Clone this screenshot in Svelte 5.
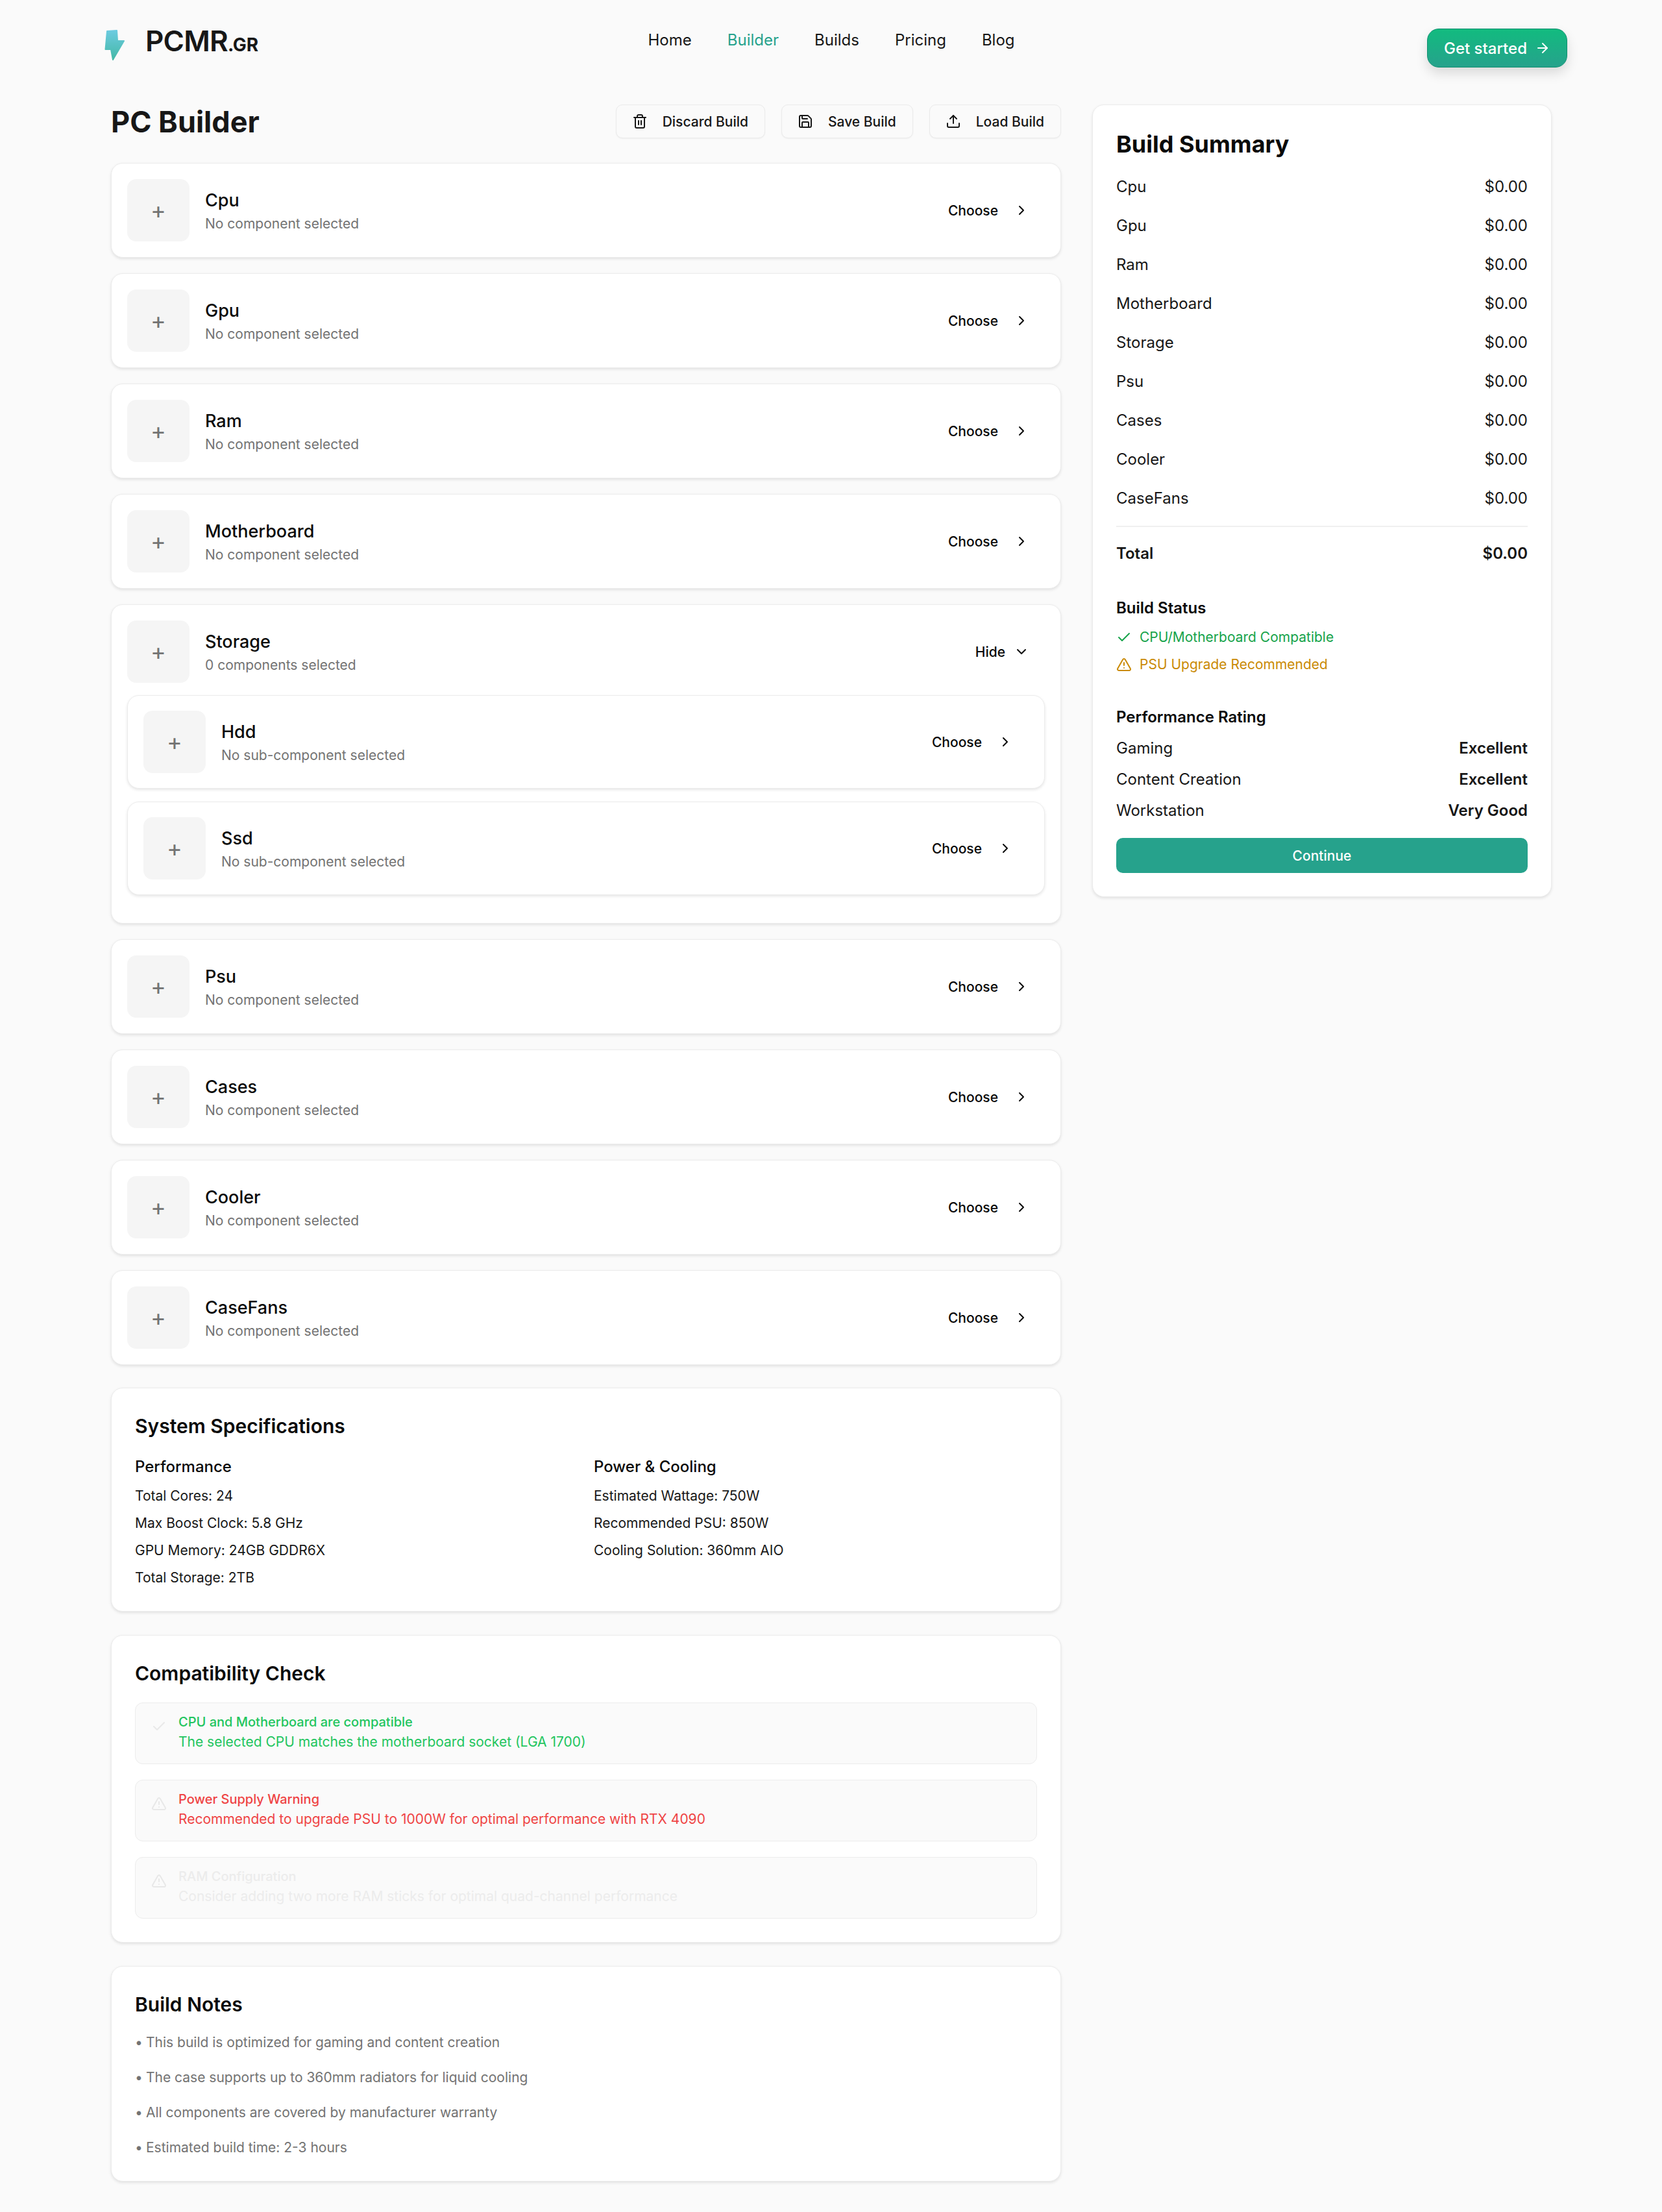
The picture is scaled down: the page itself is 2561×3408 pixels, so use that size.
<script>
  const before = ['Cpu', 'Gpu', 'Ram', 'Motherboard'];
  const after = ['Psu', 'Cases', 'Cooler', 'CaseFans'];
  const subs = ['Hdd', 'Ssd'];
  const summary = ['Cpu', 'Gpu', 'Ram', 'Motherboard', 'Storage', 'Psu', 'Cases', 'Cooler', 'CaseFans'];
  const ratings = [['Gaming', 'Excellent'], ['Content Creation', 'Excellent'], ['Workstation', 'Very Good']];
  const perf = ['Total Cores: 24', 'Max Boost Clock: 5.8 GHz', 'GPU Memory: 24GB GDDR6X', 'Total Storage: 2TB'];
  const power = ['Estimated Wattage: 750W', 'Recommended PSU: 850W', 'Cooling Solution: 360mm AIO'];
  const checks = [
    { tone: 'ok', icon: 'check', title: 'CPU and Motherboard are compatible', text: 'The selected CPU matches the motherboard socket (LGA 1700)' },
    { tone: 'bad', icon: 'warn', title: 'Power Supply Warning', text: 'Recommended to upgrade PSU to 1000W for optimal performance with RTX 4090' },
    { tone: 'faint', icon: 'warn', title: 'RAM Configuration', text: 'Consider adding two more RAM sticks for optimal quad-channel performance' }
  ];
  const notes = [
    'This build is optimized for gaming and content creation',
    'The case supports up to 360mm radiators for liquid cooling',
    'All components are covered by manufacturer warranty',
    'Estimated build time: 2-3 hours'
  ];
</script>

{#snippet chevron()}
  <svg class="icon" viewBox="0 0 24 24"><path d="m9 18 6-6-6-6" /></svg>
{/snippet}

{#snippet check()}
  <svg class="icon" viewBox="0 0 24 24"><path d="M20 6 9 17l-5-5" /></svg>
{/snippet}

{#snippet warn()}
  <svg class="icon" viewBox="0 0 24 24">
    <path d="m21.73 18-8-14a2 2 0 0 0-3.48 0l-8 14A2 2 0 0 0 4 21h16a2 2 0 0 0 1.73-3" />
    <path d="M12 9v4" />
    <path d="M12 17h.01" />
  </svg>
{/snippet}

{#snippet slot(name, sub, nested)}
  <div class="slot" class:nested>
    <div class="thumb">+</div>
    <div class="info">
      <div class="name">{name}</div>
      <div class="sub">{sub}</div>
    </div>
    <button class="choose">Choose {@render chevron()}</button>
  </div>
{/snippet}

<header>
  <div class="brand">
    <svg class="bolt" viewBox="0 0 32 50">
      <defs>
        <linearGradient id="boltFill" x1="0" y1="0" x2="0" y2="1">
          <stop offset="0" stop-color="#6ccbe0" />
          <stop offset="1" stop-color="#44b8a6" />
        </linearGradient>
      </defs>
      <polygon points="4,3 19,2 20,18 30,18 13,47 10,31 1.5,31" fill="url(#boltFill)" stroke="url(#boltFill)" stroke-width="2" stroke-linejoin="round" />
    </svg>
    <span class="logo">PCMR<small>.GR</small></span>
  </div>
  <nav>
    <span>Home</span>
    <span class="active">Builder</span>
    <span>Builds</span>
    <span>Pricing</span>
    <span>Blog</span>
  </nav>
  <div class="cta-wrap">
    <button class="cta">
      Get started
      <svg class="icon" viewBox="0 0 24 24"><path d="M5 12h14" /><path d="m12 5 7 7-7 7" /></svg>
    </button>
  </div>
</header>

<main>
  <div class="left">
    <div class="title-row">
      <h1>PC Builder</h1>
      <div class="actions">
        <button class="ghost">
          <svg class="icon" viewBox="0 0 24 24">
            <path d="M3 6h18" /><path d="M19 6v14c0 1-1 2-2 2H7c-1 0-2-1-2-2V6" /><path d="M8 6V4c0-1 1-2 2-2h4c1 0 2 1 2 2v2" /><path d="M10 11v6" /><path d="M14 11v6" />
          </svg>
          Discard Build
        </button>
        <button class="ghost">
          <svg class="icon" viewBox="0 0 24 24">
            <path d="M15.2 3a2 2 0 0 1 1.4.6l3.8 3.8a2 2 0 0 1 .6 1.4V19a2 2 0 0 1-2 2H5a2 2 0 0 1-2-2V5a2 2 0 0 1 2-2z" /><path d="M17 21v-7a1 1 0 0 0-1-1H8a1 1 0 0 0-1 1v7" /><path d="M7 3v4a1 1 0 0 0 1 1h7" />
          </svg>
          Save Build
        </button>
        <button class="ghost">
          <svg class="icon" viewBox="0 0 24 24">
            <path d="M21 15v4a2 2 0 0 1-2 2H5a2 2 0 0 1-2-2v-4" /><path d="M17 8l-5-5-5 5" /><path d="M12 3v12" />
          </svg>
          Load Build
        </button>
      </div>
    </div>

    <div class="slots">
      {#each before as name}
        {@render slot(name, 'No component selected', false)}
      {/each}

      <div class="group">
        <div class="group-head">
          <div class="thumb">+</div>
          <div class="info">
            <div class="name">Storage</div>
            <div class="sub">0 components selected</div>
          </div>
          <button class="choose hide">
            Hide
            <svg class="icon" viewBox="0 0 24 24"><path d="m6 9 6 6 6-6" /></svg>
          </button>
        </div>
        {#each subs as name}
          {@render slot(name, 'No sub-component selected', true)}
        {/each}
      </div>

      {#each after as name}
        {@render slot(name, 'No component selected', false)}
      {/each}
    </div>

    <section class="card">
      <h2>System Specifications</h2>
      <div class="spec-grid">
        <div>
          <h3>Performance</h3>
          <ul class="specs">
            {#each perf as row}<li>{row}</li>{/each}
          </ul>
        </div>
        <div>
          <h3>Power &amp; Cooling</h3>
          <ul class="specs">
            {#each power as row}<li>{row}</li>{/each}
          </ul>
        </div>
      </div>
    </section>

    <section class="card">
      <h2>Compatibility Check</h2>
      <div class="checks">
        {#each checks as item}
          <div class="check {item.tone}">
            <div class="check-icon">
              {#if item.icon === 'check'}{@render check()}{:else}{@render warn()}{/if}
            </div>
            <div>
              <div class="check-title">{item.title}</div>
              <div class="check-text">{item.text}</div>
            </div>
          </div>
        {/each}
      </div>
    </section>

    <section class="card">
      <h2>Build Notes</h2>
      <ul class="notes">
        {#each notes as note}
          <li><span class="dot">•</span>{note}</li>
        {/each}
      </ul>
    </section>
  </div>

  <aside class="summary">
    <h2 class="summary-title">Build Summary</h2>
    <div class="rows">
      {#each summary as name}
        <div class="row"><span>{name}</span><span>$0.00</span></div>
      {/each}
    </div>
    <div class="row total"><span>Total</span><span>$0.00</span></div>

    <h3 class="block-title">Build Status</h3>
    <div class="status ok">{@render check()}CPU/Motherboard Compatible</div>
    <div class="status warning">{@render warn()}PSU Upgrade Recommended</div>

    <h3 class="block-title">Performance Rating</h3>
    <div class="ratings">
      {#each ratings as [label, value]}
        <div class="row"><span>{label}</span><strong>{value}</strong></div>
      {/each}
    </div>
    <button class="continue">Continue</button>
  </aside>
</main>

<style>
  :global(body) {
    background: #fafafa;
    color: #171717;
    font-family: Inter, "Liberation Sans", sans-serif;
  }

  button {
    font-family: inherit;
    cursor: pointer;
  }

  .icon {
    width: 24px;
    height: 24px;
    flex: none;
    fill: none;
    stroke: currentColor;
    stroke-width: 2;
    stroke-linecap: round;
    stroke-linejoin: round;
  }

  header {
    display: grid;
    grid-template-columns: 1fr auto 1fr;
    height: 161px;
    padding: 0 146px 0 147px;
    box-sizing: border-box;
  }

  .brand {
    display: flex;
    align-items: flex-start;
    gap: 31px;
    padding: 45px 0 0 14px;
  }

  .bolt {
    width: 32px;
    height: 50px;
  }

  .logo {
    margin-top: -7px;
    font-size: 44px;
    font-weight: 600;
    letter-spacing: -0.8px;
    line-height: 50px;
    color: #171717;
  }

  .logo small {
    font-size: 28px;
    font-weight: 700;
    letter-spacing: -0.2px;
  }

  nav {
    display: flex;
    gap: 55px;
    padding-top: 44px;
    font-size: 24px;
    line-height: 36px;
  }

  nav span {
    font-weight: 400;
  }

  .active {
    color: #26a28c;
  }

  .cta-wrap {
    display: flex;
    justify-content: flex-end;
    align-items: flex-start;
    padding-top: 44px;
  }

  .cta {
    display: flex;
    align-items: center;
    gap: 12px;
    height: 60px;
    width: 216px;
    justify-content: center;
    border: 1px solid #0f8f70;
    border-radius: 18px;
    background: linear-gradient(180deg, #12bb7f, #26a28c);
    color: #fff;
    font-size: 24px;
    font-weight: 500;
    box-shadow: 0 9px 18px rgba(0, 0, 0, 0.13);
  }

  main {
    display: grid;
    grid-template-columns: 1464px 708px;
    gap: 48px;
    align-items: start;
    padding: 0 170px 49px 171px;
  }

  .title-row {
    display: flex;
    justify-content: space-between;
    align-items: center;
    height: 52px;
    margin-bottom: 38px;
  }

  h1 {
    margin: 0;
    font-size: 45px;
    font-weight: 700;
    color: #171717;
  }

  .actions {
    display: flex;
    gap: 25px;
  }

  .ghost {
    display: flex;
    align-items: center;
    gap: 23px;
    height: 52px;
    padding: 0 25px 0 24px;
    border: 1px solid #ebebeb;
    border-radius: 10px;
    background: #fafafa;
    color: #171717;
    font-size: 21px;
    font-weight: 500;
    box-shadow: 0 1px 2px rgba(0, 0, 0, 0.05);
  }

  .slots {
    display: flex;
    flex-direction: column;
    gap: 24px;
  }

  .slot,
  .group,
  .card,
  .summary {
    border: 1px solid #ececec;
    border-radius: 18px;
    background: #fff;
    box-shadow: 0 2px 4px rgba(0, 0, 0, 0.1);
  }

  .slot {
    display: flex;
    align-items: center;
    gap: 24px;
    padding: 24px;
  }

  .slot.nested {
    margin-bottom: 20px;
    height: 144px;
    box-sizing: border-box;
  }

  .group {
    padding: 24px 24px 23px;
  }

  .group-head {
    display: flex;
    align-items: center;
    gap: 24px;
    margin-bottom: 19px;
  }

  .thumb {
    display: flex;
    align-items: center;
    justify-content: center;
    flex: none;
    width: 96px;
    height: 96px;
    border-radius: 14px;
    background: #f5f5f5;
    color: #737373;
    font-size: 36px;
    line-height: 1;
  }

  .info {
    flex: 1;
  }

  .name {
    font-size: 27px;
    font-weight: 500;
    line-height: 40px;
    color: #0a0a0a;
  }

  .sub {
    margin-top: 1px;
    font-size: 21px;
    line-height: 30px;
    color: #737373;
  }

  .choose {
    display: flex;
    align-items: center;
    gap: 24px;
    padding: 0 24px;
    border: 0;
    background: none;
    color: #0a0a0a;
    font-size: 21px;
    font-weight: 500;
  }

  .choose.hide {
    gap: 13px;
  }

  .card {
    margin-top: 36px;
    padding: 36px;
  }

  .slots + .card {
    margin-top: 35px;
  }

  h2 {
    margin: 0 0 22px;
    font-size: 30px;
    font-weight: 600;
    line-height: 45px;
    color: #0a0a0a;
  }

  h3 {
    margin: 0 0 12px;
    font-size: 24px;
    font-weight: 500;
    line-height: 36px;
    color: #0a0a0a;
  }

  .spec-grid {
    display: grid;
    grid-template-columns: 1fr 1fr;
    gap: 24px;
  }

  ul {
    margin: 0;
    padding: 0;
    list-style: none;
  }

  .specs {
    display: flex;
    flex-direction: column;
    gap: 12px;
    font-size: 21px;
    line-height: 30px;
    color: #171717;
  }

  .checks {
    display: flex;
    flex-direction: column;
    gap: 24px;
  }

  .check {
    display: flex;
    gap: 18px;
    padding: 14px 24px 18px;
    border: 1px solid #ececec;
    border-radius: 12px;
    background: #fafafa;
    font-size: 21px;
    line-height: 30px;
  }

  .check-icon {
    padding-top: 10px;
    height: 24px;
    color: #e8e8e8;
  }

  .check-title {
    font-size: 20px;
    font-weight: 500;
  }

  .check-text {
    margin-top: 1px;
  }

  .check.ok {
    color: #22c55e;
  }

  .check.bad {
    color: #ef4444;
  }

  .check.faint {
    color: #ececec;
  }

  .notes {
    display: flex;
    flex-direction: column;
    gap: 24px;
    margin-top: -1px;
    font-size: 21px;
    line-height: 30px;
    color: #737373;
  }

  .dot {
    display: inline-block;
    width: 17px;
  }

  .summary {
    padding: 36px;
  }

  .summary-title {
    margin: 0 0 24px;
    font-size: 36px;
    font-weight: 700;
    line-height: 48px;
  }

  .rows,
  .ratings {
    display: flex;
    flex-direction: column;
    gap: 24px;
    padding-bottom: 24px;
    border-bottom: 2px solid #f0f0f0;
  }

  .ratings {
    gap: 12px;
    padding-bottom: 0;
    border: 0;
  }

  .row {
    display: flex;
    justify-content: space-between;
    font-size: 24px;
    line-height: 36px;
  }

  .row strong {
    font-weight: 600;
  }

  .total {
    margin-top: 23px;
    font-weight: 600;
  }

  .block-title {
    margin: 48px 0 12px;
    font-weight: 600;
  }

  .status {
    display: flex;
    align-items: center;
    gap: 12px;
    margin-bottom: 12px;
    font-size: 21px;
    line-height: 30px;
  }

  .status.ok {
    color: #16a34a;
  }

  .status.warning {
    color: #ca8a04;
    margin-bottom: 0;
  }

  .continue {
    display: block;
    width: 100%;
    height: 54px;
    margin-top: 24px;
    border: 0;
    border-radius: 10px;
    background: #26a28c;
    color: #fff;
    font-size: 21px;
    font-weight: 500;
  }
</style>
